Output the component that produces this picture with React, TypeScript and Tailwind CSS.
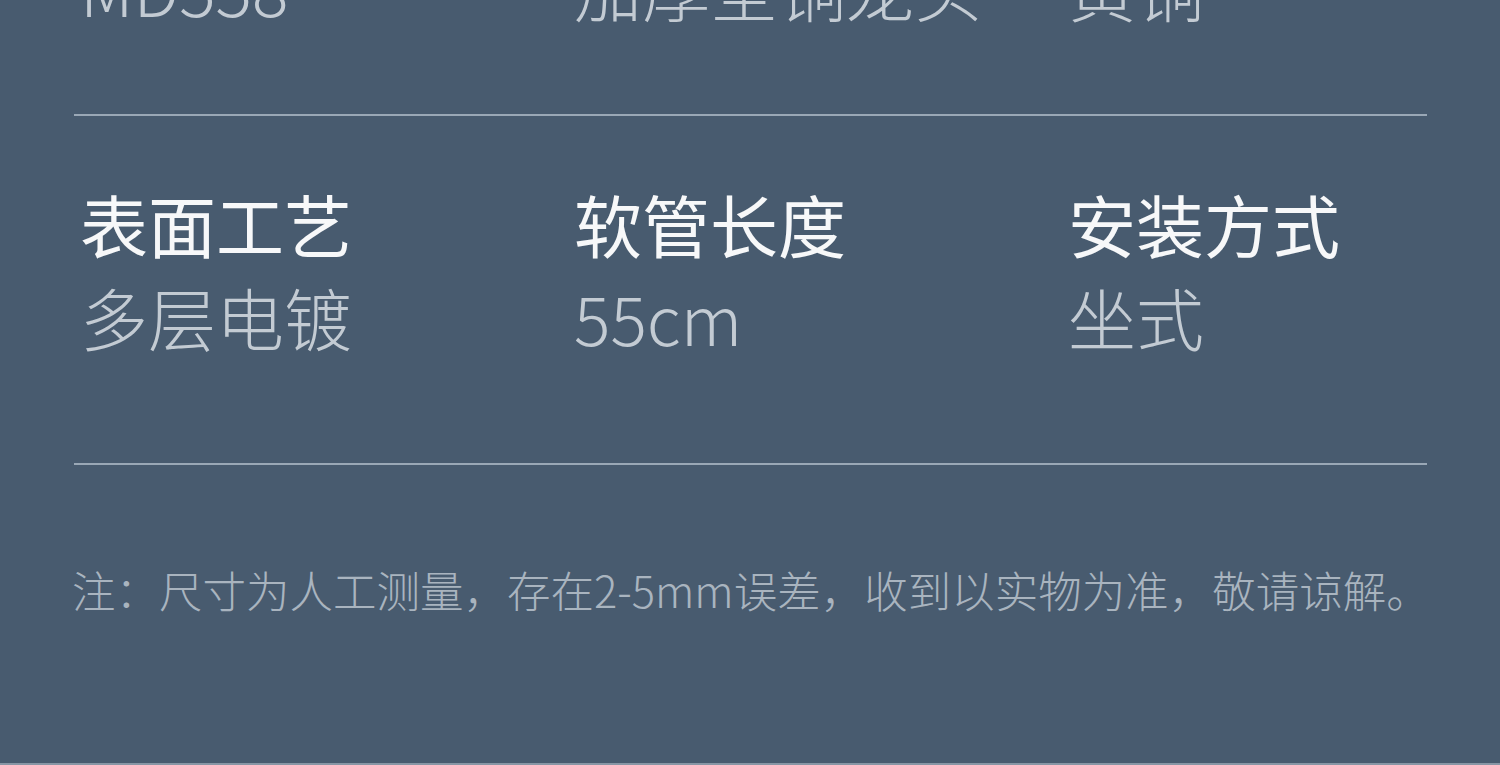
import React from "react";

const font = { fontFamily: '"Noto Sans CJK SC", "Noto Sans", sans-serif' };

function Cell({ label, value }: { label?: string; value: string }) {
  return (
    <div className="flex flex-col">
      {label && (
        <div className="text-[68px] leading-none font-normal text-[#f7f8f9]">{label}</div>
      )}
      <div className={`text-[68px] leading-none font-light text-[#c3cbd3] ${label ? "mt-[25px]" : ""}`}>{value}</div>
    </div>
  );
}

export default function App() {
  return (
    <div className="w-[1500px] h-[765px] overflow-hidden bg-[#485b6f] relative" style={font}>
      <div className="flex flex-col h-full">
        <div className="mt-[-46px] pl-[80px] grid grid-cols-[494px_494px_1fr]">
          <Cell value="MD558" />
          <Cell value="加厚全铜龙头" />
          <Cell value="黄铜" />
        </div>
        <div className="mt-[92px] ml-[74px] w-[1353px] h-[2px] bg-[#9aa8b6]" />
        <div className="mt-[74px] pl-[80px] grid grid-cols-[494px_494px_1fr]">
          <Cell label="表面工艺" value="多层电镀" />
          <Cell label="软管长度" value="55cm" />
          <Cell label="安装方式" value="坐式" />
        </div>
        <div className="mt-[112px] ml-[74px] w-[1353px] h-[2px] bg-[#9aa8b6]" />
        <div className="mt-[103px] ml-[72px] text-[43.5px] leading-none font-light text-[#a9b4bf] whitespace-nowrap">
          注：尺寸为人工测量，存在2-5mm误差，收到以实物为准，敬请谅解。
        </div>
        <div className="flex-1" />
        <div className="h-[2px] bg-[#8796a5]" />
      </div>
    </div>
  );
}
